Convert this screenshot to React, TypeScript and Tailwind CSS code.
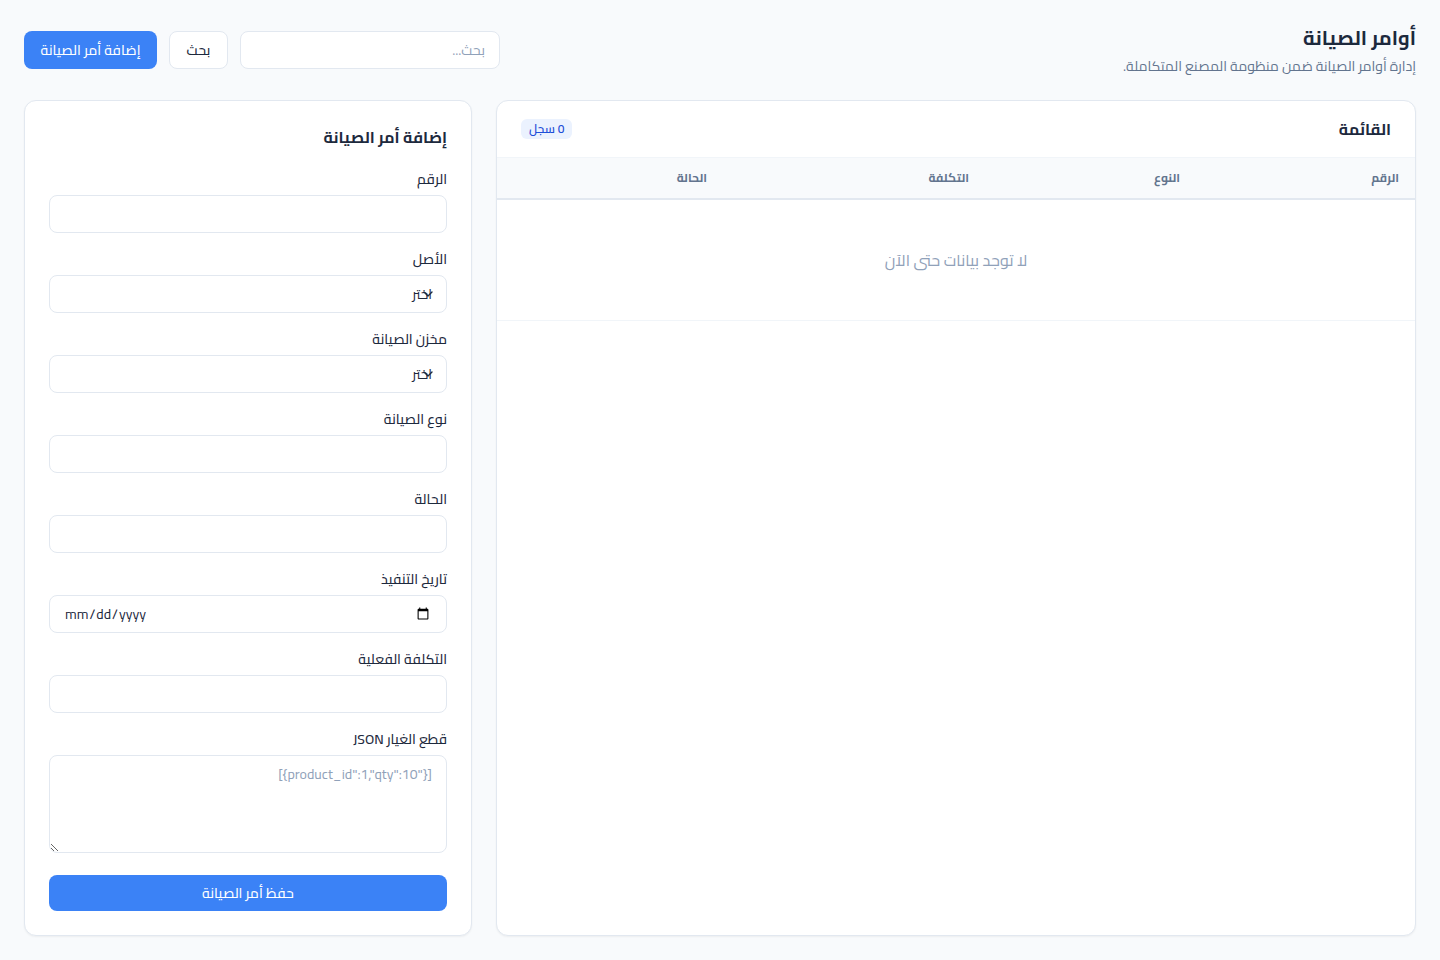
import { clsx } from "clsx";

const inputClass =
  "block w-full rounded-lg border border-slate-200 bg-white px-3.5 text-sm text-slate-800 outline-none placeholder:text-slate-400 focus:border-[#3b82f6]";

const columns = [
  { label: "الرقم", width: "w-[219px]" },
  { label: "النوع", width: "w-[211px]" },
  { label: "التكلفة", width: "w-[262px]" },
  { label: "الحالة", width: "w-[226px]" },
];

function Button({
  variant = "primary",
  className,
  ...props
}: React.ButtonHTMLAttributes<HTMLButtonElement> & { variant?: "primary" | "outline" }) {
  const variants = {
    primary: "bg-[#3b82f6] text-white hover:bg-[#2563eb]",
    outline: "border border-slate-200 bg-white text-slate-800 hover:bg-slate-50",
  };
  return (
    <button
      className={clsx(
        "inline-flex shrink-0 items-center justify-center whitespace-nowrap rounded-lg text-sm font-medium",
        variants[variant],
        className,
      )}
      {...props}
    />
  );
}

function Field({ id, label, children }: { id: string; label: string; children: React.ReactNode }) {
  return (
    <div>
      <label htmlFor={id} className="mb-1.5 block text-sm font-medium text-slate-800">
        {label}
      </label>
      {children}
    </div>
  );
}

function TextField({ id, label, type = "text" }: { id: string; label: string; type?: string }) {
  return (
    <Field id={id} label={label}>
      <input
        id={id}
        name={id}
        type={type}
        dir={type === "date" ? "ltr" : undefined}
        className={clsx(inputClass, "h-[38px]")}
      />
    </Field>
  );
}

function SelectField({ id, label }: { id: string; label: string }) {
  return (
    <Field id={id} label={label}>
      <div className="relative">
        <select id={id} name={id} className={clsx(inputClass, "h-[38px] appearance-none")}>
          <option value="">اختر</option>
        </select>
        <svg
          className="pointer-events-none absolute right-[11px] top-[11px] h-4 w-4 text-slate-800"
          viewBox="0 0 24 24"
          fill="none"
          stroke="currentColor"
          aria-hidden="true"
        >
          <path d="m6 9 6 6 6-6" strokeWidth={2} strokeLinecap="round" strokeLinejoin="round" />
        </svg>
      </div>
    </Field>
  );
}

export default function App() {
  return (
    <main
      dir="rtl"
      lang="ar"
      className="flex min-h-screen flex-col gap-6 bg-slate-50 p-6 font-[Cairo,'Noto_Sans','DejaVu_Sans',sans-serif] text-slate-800"
    >
      <header className="flex flex-wrap items-center justify-between gap-4">
        <div>
          <h1 className="text-xl leading-7 font-bold">أوامر الصيانة</h1>
          <p className="mt-1 text-sm text-slate-500">إدارة أوامر الصيانة ضمن منظومة المصنع المتكاملة.</p>
        </div>
        <form className="flex gap-3" onSubmit={(e) => e.preventDefault()}>
          <div className="w-[260px]">
            <input type="search" aria-label="بحث" placeholder="بحث..." className={clsx(inputClass, "h-[38px]")} />
          </div>
          <Button type="submit" variant="outline" className="min-w-[59px] px-4">
            بحث
          </Button>
          <Button type="button" className="min-w-[133px] px-4">
            إضافة أمر الصيانة
          </Button>
        </form>
      </header>

      <div className="grid flex-1 grid-cols-1 gap-6 lg:grid-cols-3">
        <section className="overflow-hidden rounded-xl border border-slate-200 bg-white shadow-xs lg:col-span-2">
          <div className="flex items-center justify-between px-6 py-4">
            <h2 className="text-base font-bold">القائمة</h2>
            <span className="rounded-md bg-[#ebf2fe] px-2 py-0.5 text-xs font-semibold text-[#1d4ed8]">0 سجل</span>
          </div>
          <table className="w-full table-fixed border-collapse text-right">
            <thead>
              <tr className="border-t border-b-2 border-t-slate-100 border-b-slate-200 bg-slate-50">
                {columns.map((col) => (
                  <th
                    key={col.label}
                    scope="col"
                    className={clsx("px-4 py-3 text-xs font-bold text-slate-500", col.width)}
                  >
                    {col.label}
                  </th>
                ))}
              </tr>
            </thead>
            <tbody>
              <tr className="border-b border-slate-100">
                <td colSpan={columns.length} className="px-4 py-12 text-center text-base text-slate-400">
                  لا توجد بيانات حتى الآن
                </td>
              </tr>
            </tbody>
          </table>
        </section>

        <section className="rounded-xl border border-slate-200 bg-white p-6 shadow-xs">
          <h2 className="mb-5 text-base font-bold">إضافة أمر الصيانة</h2>
          <form className="flex flex-col gap-4" onSubmit={(e) => e.preventDefault()}>
            <TextField id="number" label="الرقم" />
            <SelectField id="asset" label="الأصل" />
            <SelectField id="warehouse" label="مخزن الصيانة" />
            <TextField id="type" label="نوع الصيانة" />
            <TextField id="status" label="الحالة" />
            <TextField id="date" label="تاريخ التنفيذ" type="date" />
            <TextField id="cost" label="التكلفة الفعلية" />
            <Field id="parts" label="قطع الغيار JSON">
              <textarea
                id="parts"
                name="parts"
                placeholder={'[{"product_id":1,"qty":10}]'}
                className={clsx(inputClass, "h-[98px] resize-y py-2")}
              />
            </Field>
            <Button type="submit" className="mt-1.5 h-9 w-full">
              حفظ أمر الصيانة
            </Button>
          </form>
        </section>
      </div>
    </main>
  );
}
